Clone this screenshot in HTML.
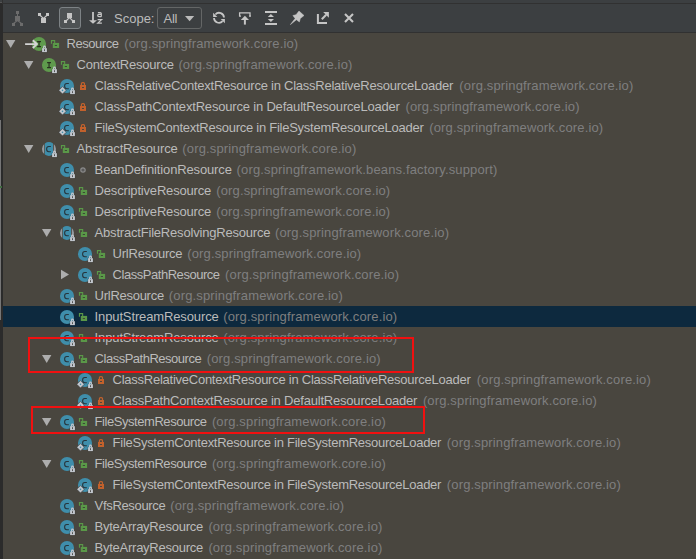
<!DOCTYPE html><html><head><meta charset="utf-8"><style>
html,body{margin:0;padding:0;width:696px;height:559px;overflow:hidden;background:#49463f;}
body{position:relative;font-family:"Liberation Sans",sans-serif;font-size:13px;}
.a{position:absolute;}
.t{position:absolute;white-space:pre;line-height:21px;height:21px;}
svg{position:absolute;overflow:visible;}
</style></head><body>

<div class="a" style="left:0;top:0;width:696px;height:3px;background:#3c3f41"></div>
<div class="a" style="left:0;top:3px;width:696px;height:1px;background:#313131"></div>
<div class="a" style="left:0;top:4px;width:696px;height:28px;background:#3c3f41"></div>
<div class="a" style="left:0;top:32px;width:696px;height:1px;background:#313131"></div>
<div class="a" style="left:0;top:3px;width:3px;height:556px;background:#2b2b2b"></div>
<div class="a" style="left:2px;top:0;width:1px;height:4px;background:#313131"></div>
<div class="a" style="left:0;top:2px;width:2px;height:1px;background:#555555"></div>
<div class="a" style="left:0;top:120px;width:1px;height:200px;background:#767676"></div>
<div class="a" style="left:0;top:186px;width:2px;height:2px;background:#3f6a3e"></div>
<svg class="a" style="left:0;top:0" width="696" height="33" viewBox="0 0 696 33">
<g fill="#6c6c6c" stroke="none">
<rect x="16" y="11" width="3" height="3"/><rect x="17" y="13.5" width="1" height="3"/><rect x="15" y="16" width="5" height="5"/>
<rect x="12" y="23" width="3" height="3"/><rect x="20" y="23" width="3" height="3"/>
</g>
<path d="M17.5 20.5L13.5 23.5M17.5 20.5L21.5 23.5" stroke="#6c6c6c" stroke-width="1.1"/>
<g fill="#c5c5c5">
<rect x="38" y="13" width="3" height="3"/><rect x="46" y="13" width="3" height="3"/><rect x="41" y="18" width="5" height="5"/>
</g>
<path d="M40 15.2L43.5 18.5L47 15.2" stroke="#c5c5c5" stroke-width="1.2" fill="none"/>
<rect x="59.5" y="7.5" width="21" height="21" rx="2.5" fill="#4e5254" stroke="#7d8285" stroke-width="1"/>
<g fill="#c5c5c5">
<rect x="67" y="13" width="5" height="5"/><rect x="64" y="20" width="3" height="3"/><rect x="72" y="20" width="3" height="3"/>
</g>
<path d="M66 21L69.5 17.6L73 21" stroke="#c5c5c5" stroke-width="1.2" fill="none"/>
<path d="M93 12V21" stroke="#c5c5c5" stroke-width="1.8"/>
<path d="M89 20.2H97L93 23.8Z" fill="#c5c5c5"/>
<path d="M97.9 12.6H100.3Q101.3 12.6 101.3 13.6V16.8M101.3 14.4H99Q97.7 14.4 97.7 15.6Q97.7 16.7 99 16.7H101.3" stroke="#c5c5c5" stroke-width="1.2" fill="none"/>
<path d="M97.6 19.6H101.6L97.8 23.1H101.9" stroke="#c5c5c5" stroke-width="1.2" fill="none"/>
<rect x="157.5" y="7.5" width="44" height="21" rx="2.5" fill="#3c3f41" stroke="#646666" stroke-width="1"/>
<path d="M185 16H194.2L189.6 21.3Z" fill="#bbbbbb"/>
<path d="M215.4 14.5A4.9 4.9 0 0 1 224 17.6" stroke="#c5c5c5" stroke-width="1.8" fill="none"/>
<path d="M213.1 12.7V16.9H217.3Z" fill="#c5c5c5"/>
<path d="M222.6 21.1A4.9 4.9 0 0 1 214 18" stroke="#c5c5c5" stroke-width="1.8" fill="none"/>
<path d="M224.9 23.2V19H220.7Z" fill="#c5c5c5"/>
<path d="M239.6 16.8V12.8H250V16.8M239 16.2H241M249 16.2H251" stroke="#c5c5c5" stroke-width="1.3" fill="none"/>
<path d="M240.8 19.9L244.9 15.7L249 19.9Z" fill="#c5c5c5"/>
<path d="M244.9 19V24.6" stroke="#c5c5c5" stroke-width="2"/>
<path d="M265 12H277M265 24H277" stroke="#c5c5c5" stroke-width="2"/>
<path d="M267.8 16.9L270.9 14L274 16.9ZM267.8 19.1H274L270.9 22Z" fill="#c5c5c5"/>
<path d="M299 11L304 15.5L300.3 18.6L299.4 21.9L296.4 19.8L290.4 24.6L295.1 18.5L292.9 15.5L296 14.8Z" fill="#c5c5c5" stroke="#c5c5c5" stroke-width="0.5" stroke-linejoin="round"/>
<path d="M317.9 13.9V23H327" stroke="#c5c5c5" stroke-width="2" fill="none"/>
<path d="M323.2 12.1H328.9V17.8Z" fill="#c5c5c5"/>
<path d="M321.8 19.2L326.2 14.8" stroke="#c5c5c5" stroke-width="2"/>
<path d="M345 14.1L353 22.1M353 14.1L345 22.1" stroke="#c5c5c5" stroke-width="2.1"/>
</svg>
<div class="t" style="left:114px;top:7.5px;color:#bbbbbb">Scope:</div>
<div class="t" style="left:163.5px;top:7.5px;color:#bbbbbb;letter-spacing:-0.25px">All</div>
<div class="a" style="left:3px;top:306px;width:693px;height:21px;background:#0d293e"></div>
<svg width="0" height="0" style="position:absolute"><defs>
<symbol id="lockw" viewBox="0 0 16 16" overflow="visible">
</symbol>
</defs></svg>
<svg class="a" style="left:5.80px;top:39px" width="10" height="10" viewBox="0 0 10 10"><path d="M0 0.9H9.4L4.7 9.1Z" fill="#adadad"/></svg>
<svg class="a" style="left:30.90px;top:35.90px" width="16" height="16" viewBox="0 0 16 16"><circle cx="8" cy="8" r="7.05" fill="#5f9a4d"/><path d="M6.1 5.6h3.9M6.1 10.6h3.9M8.05 5.6v5" stroke="#27301f" stroke-width="1.15" fill="none"/><path d="M-5.9 8.1H5.8M1.8 4.2L5.9 8.1L1.8 12" stroke="#d4d4d4" stroke-width="1.9" fill="none"/><path d="M10.8 12.0h5.4v4.4h-5.4z" fill="none" stroke="#333" stroke-width="0.6" opacity="0.35"/><path d="M11.1 12.2h4.8v3.9h-4.8z" fill="#c3c8cf"/><path d="M12.6 12.4V11A0.9 0.9 0 0 1 14.4 11V12.4" fill="none" stroke="#c3c8cf" stroke-width="1.1"/><path d="M13.5 13.2v1.9" stroke="#555" stroke-width="1"/></svg>
<svg class="a" style="left:49.90px;top:32px" width="12" height="21" viewBox="0 0 12 21"><path d="M1.45 11.8V8.6H4.65V11" stroke="#5a9848" stroke-width="1.1" fill="none"/><rect x="2.8" y="10.9" width="6.3" height="5.1" fill="#5a9848"/><rect x="4.8" y="13" width="2.2" height="1" fill="#3c4a35"/></svg>
<div class="t" style="left:66.50px;top:33px;color:#bbbbbb;letter-spacing:-0.457px">Resource</div>
<div class="t" style="left:124.20px;top:33px;color:#7f7f7f;letter-spacing:0.150px">(org.springframework.core.io)</div>
<svg class="a" style="left:23.80px;top:60px" width="10" height="10" viewBox="0 0 10 10"><path d="M0 0.9H9.4L4.7 9.1Z" fill="#adadad"/></svg>
<svg class="a" style="left:41.00px;top:56.90px" width="16" height="16" viewBox="0 0 16 16"><circle cx="8" cy="8" r="7.05" fill="#5f9a4d"/><path d="M6.1 5.6h3.9M6.1 10.6h3.9M8.05 5.6v5" stroke="#27301f" stroke-width="1.15" fill="none"/><path d="M10.8 12.0h5.4v4.4h-5.4z" fill="none" stroke="#333" stroke-width="0.6" opacity="0.35"/><path d="M11.1 12.2h4.8v3.9h-4.8z" fill="#c3c8cf"/><path d="M12.6 12.4V11A0.9 0.9 0 0 1 14.4 11V12.4" fill="none" stroke="#c3c8cf" stroke-width="1.1"/><path d="M13.5 13.2v1.9" stroke="#555" stroke-width="1"/></svg>
<svg class="a" style="left:60.00px;top:53px" width="12" height="21" viewBox="0 0 12 21"><path d="M1.45 11.8V8.6H4.65V11" stroke="#5a9848" stroke-width="1.1" fill="none"/><rect x="2.8" y="10.9" width="6.3" height="5.1" fill="#5a9848"/><rect x="4.8" y="13" width="2.2" height="1" fill="#3c4a35"/></svg>
<div class="t" style="left:76.60px;top:54px;color:#bbbbbb;letter-spacing:-0.221px">ContextResource</div>
<div class="t" style="left:178.40px;top:54px;color:#7f7f7f;letter-spacing:0.150px">(org.springframework.core.io)</div>
<svg class="a" style="left:59.00px;top:77.90px" width="16" height="16" viewBox="0 0 16 16"><circle cx="8" cy="8" r="7.05" fill="#3f8eab"/><path d="M9.85 5.5H7.8Q5.6 5.5 5.6 8.1Q5.6 10.75 7.8 10.75H9.85" stroke="#26343b" stroke-width="1.05" fill="none"/><path d="M3.5 8.6L7.2 12.3L3.5 16L-0.2 12.3Z" fill="#c3c8cf" stroke="#3a3a3a" stroke-width="0.6"/><circle cx="3.5" cy="12.35" r="0.8" fill="#3f8eab"/><path d="M10.8 12.0h5.4v4.4h-5.4z" fill="none" stroke="#333" stroke-width="0.6" opacity="0.35"/><path d="M11.1 12.2h4.8v3.9h-4.8z" fill="#c3c8cf"/><path d="M12.6 12.4V11A0.9 0.9 0 0 1 14.4 11V12.4" fill="none" stroke="#c3c8cf" stroke-width="1.1"/><path d="M13.5 13.2v1.9" stroke="#555" stroke-width="1"/></svg>
<svg class="a" style="left:78.00px;top:74px" width="12" height="21" viewBox="0 0 12 21"><path d="M3.4 11.3V9.8Q3.4 8.6 4.6 8.6H5.3Q6.5 8.6 6.5 9.8V11.3" stroke="#c2612c" stroke-width="1.2" fill="none"/><rect x="2" y="11" width="6" height="5" fill="#c2612c"/><rect x="4" y="13" width="2" height="1" fill="#4a4640"/></svg>
<div class="t" style="left:94.60px;top:75px;color:#bbbbbb;letter-spacing:-0.245px">ClassRelativeContextResource in ClassRelativeResourceLoader</div>
<div class="t" style="left:459.30px;top:75px;color:#7f7f7f;letter-spacing:0.150px">(org.springframework.core.io)</div>
<svg class="a" style="left:59.00px;top:98.90px" width="16" height="16" viewBox="0 0 16 16"><circle cx="8" cy="8" r="7.05" fill="#3f8eab"/><path d="M9.85 5.5H7.8Q5.6 5.5 5.6 8.1Q5.6 10.75 7.8 10.75H9.85" stroke="#26343b" stroke-width="1.05" fill="none"/><path d="M3.5 8.6L7.2 12.3L3.5 16L-0.2 12.3Z" fill="#c3c8cf" stroke="#3a3a3a" stroke-width="0.6"/><circle cx="3.5" cy="12.35" r="0.8" fill="#3f8eab"/><path d="M10.8 12.0h5.4v4.4h-5.4z" fill="none" stroke="#333" stroke-width="0.6" opacity="0.35"/><path d="M11.1 12.2h4.8v3.9h-4.8z" fill="#c3c8cf"/><path d="M12.6 12.4V11A0.9 0.9 0 0 1 14.4 11V12.4" fill="none" stroke="#c3c8cf" stroke-width="1.1"/><path d="M13.5 13.2v1.9" stroke="#555" stroke-width="1"/></svg>
<svg class="a" style="left:78.00px;top:95px" width="12" height="21" viewBox="0 0 12 21"><path d="M3.4 11.3V9.8Q3.4 8.6 4.6 8.6H5.3Q6.5 8.6 6.5 9.8V11.3" stroke="#c2612c" stroke-width="1.2" fill="none"/><rect x="2" y="11" width="6" height="5" fill="#c2612c"/><rect x="4" y="13" width="2" height="1" fill="#4a4640"/></svg>
<div class="t" style="left:94.60px;top:96px;color:#bbbbbb;letter-spacing:-0.187px">ClassPathContextResource in DefaultResourceLoader</div>
<div class="t" style="left:405.50px;top:96px;color:#7f7f7f;letter-spacing:0.150px">(org.springframework.core.io)</div>
<svg class="a" style="left:59.00px;top:119.90px" width="16" height="16" viewBox="0 0 16 16"><circle cx="8" cy="8" r="7.05" fill="#3f8eab"/><path d="M9.85 5.5H7.8Q5.6 5.5 5.6 8.1Q5.6 10.75 7.8 10.75H9.85" stroke="#26343b" stroke-width="1.05" fill="none"/><path d="M3.5 8.6L7.2 12.3L3.5 16L-0.2 12.3Z" fill="#c3c8cf" stroke="#3a3a3a" stroke-width="0.6"/><circle cx="3.5" cy="12.35" r="0.8" fill="#3f8eab"/><path d="M10.8 12.0h5.4v4.4h-5.4z" fill="none" stroke="#333" stroke-width="0.6" opacity="0.35"/><path d="M11.1 12.2h4.8v3.9h-4.8z" fill="#c3c8cf"/><path d="M12.6 12.4V11A0.9 0.9 0 0 1 14.4 11V12.4" fill="none" stroke="#c3c8cf" stroke-width="1.1"/><path d="M13.5 13.2v1.9" stroke="#555" stroke-width="1"/></svg>
<svg class="a" style="left:78.00px;top:116px" width="12" height="21" viewBox="0 0 12 21"><path d="M3.4 11.3V9.8Q3.4 8.6 4.6 8.6H5.3Q6.5 8.6 6.5 9.8V11.3" stroke="#c2612c" stroke-width="1.2" fill="none"/><rect x="2" y="11" width="6" height="5" fill="#c2612c"/><rect x="4" y="13" width="2" height="1" fill="#4a4640"/></svg>
<div class="t" style="left:94.60px;top:117px;color:#bbbbbb;letter-spacing:-0.256px">FileSystemContextResource in FileSystemResourceLoader</div>
<div class="t" style="left:429.20px;top:117px;color:#7f7f7f;letter-spacing:0.150px">(org.springframework.core.io)</div>
<svg class="a" style="left:23.80px;top:144px" width="10" height="10" viewBox="0 0 10 10"><path d="M0 0.9H9.4L4.7 9.1Z" fill="#adadad"/></svg>
<svg class="a" style="left:41.00px;top:140.90px" width="16" height="16" viewBox="0 0 16 16"><path d="M3.2 2.9A7 7 0 0 0 3.2 13.1Z M12.8 2.9A7 7 0 0 1 12.8 13.1Z" fill="#959aa0"/><path d="M3.85 2.4A7 7 0 0 1 12.0 2.4V13.6A7 7 0 0 1 3.85 13.6Z" fill="#3f8eab"/><path d="M9.85 5.5H7.8Q5.6 5.5 5.6 8.1Q5.6 10.75 7.8 10.75H9.85" stroke="#26343b" stroke-width="1.05" fill="none"/><path d="M10.8 12.0h5.4v4.4h-5.4z" fill="none" stroke="#333" stroke-width="0.6" opacity="0.35"/><path d="M11.1 12.2h4.8v3.9h-4.8z" fill="#c3c8cf"/><path d="M12.6 12.4V11A0.9 0.9 0 0 1 14.4 11V12.4" fill="none" stroke="#c3c8cf" stroke-width="1.1"/><path d="M13.5 13.2v1.9" stroke="#555" stroke-width="1"/></svg>
<svg class="a" style="left:60.00px;top:137px" width="12" height="21" viewBox="0 0 12 21"><path d="M1.45 11.8V8.6H4.65V11" stroke="#5a9848" stroke-width="1.1" fill="none"/><rect x="2.8" y="10.9" width="6.3" height="5.1" fill="#5a9848"/><rect x="4.8" y="13" width="2.2" height="1" fill="#3c4a35"/></svg>
<div class="t" style="left:76.60px;top:138px;color:#bbbbbb;letter-spacing:-0.147px">AbstractResource</div>
<div class="t" style="left:182.30px;top:138px;color:#7f7f7f;letter-spacing:0.150px">(org.springframework.core.io)</div>
<svg class="a" style="left:59.00px;top:161.90px" width="16" height="16" viewBox="0 0 16 16"><circle cx="8" cy="8" r="7.05" fill="#3f8eab"/><path d="M9.85 5.5H7.8Q5.6 5.5 5.6 8.1Q5.6 10.75 7.8 10.75H9.85" stroke="#26343b" stroke-width="1.05" fill="none"/><path d="M10.8 12.0h5.4v4.4h-5.4z" fill="none" stroke="#333" stroke-width="0.6" opacity="0.35"/><path d="M11.1 12.2h4.8v3.9h-4.8z" fill="#c3c8cf"/><path d="M12.6 12.4V11A0.9 0.9 0 0 1 14.4 11V12.4" fill="none" stroke="#c3c8cf" stroke-width="1.1"/><path d="M13.5 13.2v1.9" stroke="#555" stroke-width="1"/></svg>
<svg class="a" style="left:78.00px;top:159px" width="12" height="21" viewBox="0 0 12 21"><circle cx="5" cy="11" r="2.2" fill="#5a5a5a" stroke="#8a8a8a" stroke-width="1.2"/></svg>
<div class="t" style="left:94.60px;top:159px;color:#bbbbbb;letter-spacing:-0.138px">BeanDefinitionResource</div>
<div class="t" style="left:236.60px;top:159px;color:#7f7f7f;letter-spacing:0.143px">(org.springframework.beans.factory.support)</div>
<svg class="a" style="left:59.00px;top:182.90px" width="16" height="16" viewBox="0 0 16 16"><circle cx="8" cy="8" r="7.05" fill="#3f8eab"/><path d="M9.85 5.5H7.8Q5.6 5.5 5.6 8.1Q5.6 10.75 7.8 10.75H9.85" stroke="#26343b" stroke-width="1.05" fill="none"/><path d="M10.8 12.0h5.4v4.4h-5.4z" fill="none" stroke="#333" stroke-width="0.6" opacity="0.35"/><path d="M11.1 12.2h4.8v3.9h-4.8z" fill="#c3c8cf"/><path d="M12.6 12.4V11A0.9 0.9 0 0 1 14.4 11V12.4" fill="none" stroke="#c3c8cf" stroke-width="1.1"/><path d="M13.5 13.2v1.9" stroke="#555" stroke-width="1"/></svg>
<svg class="a" style="left:78.00px;top:179px" width="12" height="21" viewBox="0 0 12 21"><path d="M1.45 11.8V8.6H4.65V11" stroke="#5a9848" stroke-width="1.1" fill="none"/><rect x="2.8" y="10.9" width="6.3" height="5.1" fill="#5a9848"/><rect x="4.8" y="13" width="2.2" height="1" fill="#3c4a35"/></svg>
<div class="t" style="left:94.60px;top:180px;color:#bbbbbb;letter-spacing:-0.183px">DescriptiveResource</div>
<div class="t" style="left:216.20px;top:180px;color:#7f7f7f;letter-spacing:0.150px">(org.springframework.core.io)</div>
<svg class="a" style="left:59.00px;top:203.90px" width="16" height="16" viewBox="0 0 16 16"><circle cx="8" cy="8" r="7.05" fill="#3f8eab"/><path d="M9.85 5.5H7.8Q5.6 5.5 5.6 8.1Q5.6 10.75 7.8 10.75H9.85" stroke="#26343b" stroke-width="1.05" fill="none"/><path d="M10.8 12.0h5.4v4.4h-5.4z" fill="none" stroke="#333" stroke-width="0.6" opacity="0.35"/><path d="M11.1 12.2h4.8v3.9h-4.8z" fill="#c3c8cf"/><path d="M12.6 12.4V11A0.9 0.9 0 0 1 14.4 11V12.4" fill="none" stroke="#c3c8cf" stroke-width="1.1"/><path d="M13.5 13.2v1.9" stroke="#555" stroke-width="1"/></svg>
<svg class="a" style="left:78.00px;top:200px" width="12" height="21" viewBox="0 0 12 21"><path d="M1.45 11.8V8.6H4.65V11" stroke="#5a9848" stroke-width="1.1" fill="none"/><rect x="2.8" y="10.9" width="6.3" height="5.1" fill="#5a9848"/><rect x="4.8" y="13" width="2.2" height="1" fill="#3c4a35"/></svg>
<div class="t" style="left:94.60px;top:201px;color:#bbbbbb;letter-spacing:-0.183px">DescriptiveResource</div>
<div class="t" style="left:216.20px;top:201px;color:#7f7f7f;letter-spacing:0.150px">(org.springframework.core.io)</div>
<svg class="a" style="left:41.80px;top:228px" width="10" height="10" viewBox="0 0 10 10"><path d="M0 0.9H9.4L4.7 9.1Z" fill="#adadad"/></svg>
<svg class="a" style="left:59.00px;top:224.90px" width="16" height="16" viewBox="0 0 16 16"><path d="M3.2 2.9A7 7 0 0 0 3.2 13.1Z M12.8 2.9A7 7 0 0 1 12.8 13.1Z" fill="#959aa0"/><path d="M3.85 2.4A7 7 0 0 1 12.0 2.4V13.6A7 7 0 0 1 3.85 13.6Z" fill="#3f8eab"/><path d="M9.85 5.5H7.8Q5.6 5.5 5.6 8.1Q5.6 10.75 7.8 10.75H9.85" stroke="#26343b" stroke-width="1.05" fill="none"/><path d="M10.8 12.0h5.4v4.4h-5.4z" fill="none" stroke="#333" stroke-width="0.6" opacity="0.35"/><path d="M11.1 12.2h4.8v3.9h-4.8z" fill="#c3c8cf"/><path d="M12.6 12.4V11A0.9 0.9 0 0 1 14.4 11V12.4" fill="none" stroke="#c3c8cf" stroke-width="1.1"/><path d="M13.5 13.2v1.9" stroke="#555" stroke-width="1"/></svg>
<svg class="a" style="left:78.00px;top:221px" width="12" height="21" viewBox="0 0 12 21"><path d="M1.45 11.8V8.6H4.65V11" stroke="#5a9848" stroke-width="1.1" fill="none"/><rect x="2.8" y="10.9" width="6.3" height="5.1" fill="#5a9848"/><rect x="4.8" y="13" width="2.2" height="1" fill="#3c4a35"/></svg>
<div class="t" style="left:94.60px;top:222px;color:#bbbbbb;letter-spacing:-0.196px">AbstractFileResolvingResource</div>
<div class="t" style="left:275.00px;top:222px;color:#7f7f7f;letter-spacing:0.150px">(org.springframework.core.io)</div>
<svg class="a" style="left:77.00px;top:245.90px" width="16" height="16" viewBox="0 0 16 16"><circle cx="8" cy="8" r="7.05" fill="#3f8eab"/><path d="M9.85 5.5H7.8Q5.6 5.5 5.6 8.1Q5.6 10.75 7.8 10.75H9.85" stroke="#26343b" stroke-width="1.05" fill="none"/><path d="M10.8 12.0h5.4v4.4h-5.4z" fill="none" stroke="#333" stroke-width="0.6" opacity="0.35"/><path d="M11.1 12.2h4.8v3.9h-4.8z" fill="#c3c8cf"/><path d="M12.6 12.4V11A0.9 0.9 0 0 1 14.4 11V12.4" fill="none" stroke="#c3c8cf" stroke-width="1.1"/><path d="M13.5 13.2v1.9" stroke="#555" stroke-width="1"/></svg>
<svg class="a" style="left:96.00px;top:242px" width="12" height="21" viewBox="0 0 12 21"><path d="M1.45 11.8V8.6H4.65V11" stroke="#5a9848" stroke-width="1.1" fill="none"/><rect x="2.8" y="10.9" width="6.3" height="5.1" fill="#5a9848"/><rect x="4.8" y="13" width="2.2" height="1" fill="#3c4a35"/></svg>
<div class="t" style="left:112.60px;top:243px;color:#bbbbbb;letter-spacing:-0.230px">UrlResource</div>
<div class="t" style="left:187.20px;top:243px;color:#7f7f7f;letter-spacing:0.150px">(org.springframework.core.io)</div>
<svg class="a" style="left:60.90px;top:269px" width="10" height="11" viewBox="0 0 10 11"><path d="M0 0.7V10.2L8 5.45Z" fill="#adadad"/></svg>
<svg class="a" style="left:77.00px;top:266.90px" width="16" height="16" viewBox="0 0 16 16"><circle cx="8" cy="8" r="7.05" fill="#3f8eab"/><path d="M9.85 5.5H7.8Q5.6 5.5 5.6 8.1Q5.6 10.75 7.8 10.75H9.85" stroke="#26343b" stroke-width="1.05" fill="none"/><path d="M10.8 12.0h5.4v4.4h-5.4z" fill="none" stroke="#333" stroke-width="0.6" opacity="0.35"/><path d="M11.1 12.2h4.8v3.9h-4.8z" fill="#c3c8cf"/><path d="M12.6 12.4V11A0.9 0.9 0 0 1 14.4 11V12.4" fill="none" stroke="#c3c8cf" stroke-width="1.1"/><path d="M13.5 13.2v1.9" stroke="#555" stroke-width="1"/></svg>
<svg class="a" style="left:96.00px;top:263px" width="12" height="21" viewBox="0 0 12 21"><path d="M1.45 11.8V8.6H4.65V11" stroke="#5a9848" stroke-width="1.1" fill="none"/><rect x="2.8" y="10.9" width="6.3" height="5.1" fill="#5a9848"/><rect x="4.8" y="13" width="2.2" height="1" fill="#3c4a35"/></svg>
<div class="t" style="left:112.60px;top:264px;color:#bbbbbb;letter-spacing:-0.462px">ClassPathResource</div>
<div class="t" style="left:225.10px;top:264px;color:#7f7f7f;letter-spacing:0.150px">(org.springframework.core.io)</div>
<svg class="a" style="left:59.00px;top:287.90px" width="16" height="16" viewBox="0 0 16 16"><circle cx="8" cy="8" r="7.05" fill="#3f8eab"/><path d="M9.85 5.5H7.8Q5.6 5.5 5.6 8.1Q5.6 10.75 7.8 10.75H9.85" stroke="#26343b" stroke-width="1.05" fill="none"/><path d="M10.8 12.0h5.4v4.4h-5.4z" fill="none" stroke="#333" stroke-width="0.6" opacity="0.35"/><path d="M11.1 12.2h4.8v3.9h-4.8z" fill="#c3c8cf"/><path d="M12.6 12.4V11A0.9 0.9 0 0 1 14.4 11V12.4" fill="none" stroke="#c3c8cf" stroke-width="1.1"/><path d="M13.5 13.2v1.9" stroke="#555" stroke-width="1"/></svg>
<svg class="a" style="left:78.00px;top:284px" width="12" height="21" viewBox="0 0 12 21"><path d="M1.45 11.8V8.6H4.65V11" stroke="#5a9848" stroke-width="1.1" fill="none"/><rect x="2.8" y="10.9" width="6.3" height="5.1" fill="#5a9848"/><rect x="4.8" y="13" width="2.2" height="1" fill="#3c4a35"/></svg>
<div class="t" style="left:94.60px;top:285px;color:#bbbbbb;letter-spacing:-0.270px">UrlResource</div>
<div class="t" style="left:168.80px;top:285px;color:#7f7f7f;letter-spacing:0.150px">(org.springframework.core.io)</div>
<svg class="a" style="left:59.00px;top:308.90px" width="16" height="16" viewBox="0 0 16 16"><circle cx="8" cy="8" r="7.05" fill="#3f8eab"/><path d="M9.85 5.5H7.8Q5.6 5.5 5.6 8.1Q5.6 10.75 7.8 10.75H9.85" stroke="#26343b" stroke-width="1.05" fill="none"/><path d="M10.8 12.0h5.4v4.4h-5.4z" fill="none" stroke="#333" stroke-width="0.6" opacity="0.35"/><path d="M11.1 12.2h4.8v3.9h-4.8z" fill="#c3c8cf"/><path d="M12.6 12.4V11A0.9 0.9 0 0 1 14.4 11V12.4" fill="none" stroke="#c3c8cf" stroke-width="1.1"/><path d="M13.5 13.2v1.9" stroke="#555" stroke-width="1"/></svg>
<svg class="a" style="left:78.00px;top:305px" width="12" height="21" viewBox="0 0 12 21"><path d="M1.45 11.8V8.6H4.65V11" stroke="#5a9848" stroke-width="1.1" fill="none"/><rect x="2.8" y="10.9" width="6.3" height="5.1" fill="#5a9848"/><rect x="4.8" y="13" width="2.2" height="1" fill="#3c4a35"/></svg>
<div class="t" style="left:94.60px;top:306px;color:#bbbbbb;letter-spacing:-0.128px">InputStreamResource</div>
<div class="t" style="left:223.20px;top:306px;color:#7f7f7f;letter-spacing:0.150px">(org.springframework.core.io)</div>
<svg class="a" style="left:59.00px;top:329.90px" width="16" height="16" viewBox="0 0 16 16"><circle cx="8" cy="8" r="7.05" fill="#3f8eab"/><path d="M9.85 5.5H7.8Q5.6 5.5 5.6 8.1Q5.6 10.75 7.8 10.75H9.85" stroke="#26343b" stroke-width="1.05" fill="none"/><path d="M10.8 12.0h5.4v4.4h-5.4z" fill="none" stroke="#333" stroke-width="0.6" opacity="0.35"/><path d="M11.1 12.2h4.8v3.9h-4.8z" fill="#c3c8cf"/><path d="M12.6 12.4V11A0.9 0.9 0 0 1 14.4 11V12.4" fill="none" stroke="#c3c8cf" stroke-width="1.1"/><path d="M13.5 13.2v1.9" stroke="#555" stroke-width="1"/></svg>
<svg class="a" style="left:78.00px;top:326px" width="12" height="21" viewBox="0 0 12 21"><path d="M1.45 11.8V8.6H4.65V11" stroke="#5a9848" stroke-width="1.1" fill="none"/><rect x="2.8" y="10.9" width="6.3" height="5.1" fill="#5a9848"/><rect x="4.8" y="13" width="2.2" height="1" fill="#3c4a35"/></svg>
<div class="t" style="left:94.60px;top:327px;color:#bbbbbb;letter-spacing:-0.128px">InputStreamResource</div>
<div class="t" style="left:223.20px;top:327px;color:#7f7f7f;letter-spacing:0.150px">(org.springframework.core.io)</div>
<svg class="a" style="left:41.80px;top:354px" width="10" height="10" viewBox="0 0 10 10"><path d="M0 0.9H9.4L4.7 9.1Z" fill="#adadad"/></svg>
<svg class="a" style="left:59.00px;top:350.90px" width="16" height="16" viewBox="0 0 16 16"><circle cx="8" cy="8" r="7.05" fill="#3f8eab"/><path d="M9.85 5.5H7.8Q5.6 5.5 5.6 8.1Q5.6 10.75 7.8 10.75H9.85" stroke="#26343b" stroke-width="1.05" fill="none"/><path d="M10.8 12.0h5.4v4.4h-5.4z" fill="none" stroke="#333" stroke-width="0.6" opacity="0.35"/><path d="M11.1 12.2h4.8v3.9h-4.8z" fill="#c3c8cf"/><path d="M12.6 12.4V11A0.9 0.9 0 0 1 14.4 11V12.4" fill="none" stroke="#c3c8cf" stroke-width="1.1"/><path d="M13.5 13.2v1.9" stroke="#555" stroke-width="1"/></svg>
<svg class="a" style="left:78.00px;top:347px" width="12" height="21" viewBox="0 0 12 21"><path d="M1.45 11.8V8.6H4.65V11" stroke="#5a9848" stroke-width="1.1" fill="none"/><rect x="2.8" y="10.9" width="6.3" height="5.1" fill="#5a9848"/><rect x="4.8" y="13" width="2.2" height="1" fill="#3c4a35"/></svg>
<div class="t" style="left:94.60px;top:348px;color:#bbbbbb;letter-spacing:-0.488px">ClassPathResource</div>
<div class="t" style="left:206.70px;top:348px;color:#7f7f7f;letter-spacing:0.150px">(org.springframework.core.io)</div>
<svg class="a" style="left:77.00px;top:371.90px" width="16" height="16" viewBox="0 0 16 16"><circle cx="8" cy="8" r="7.05" fill="#3f8eab"/><path d="M9.85 5.5H7.8Q5.6 5.5 5.6 8.1Q5.6 10.75 7.8 10.75H9.85" stroke="#26343b" stroke-width="1.05" fill="none"/><path d="M3.5 8.6L7.2 12.3L3.5 16L-0.2 12.3Z" fill="#c3c8cf" stroke="#3a3a3a" stroke-width="0.6"/><circle cx="3.5" cy="12.35" r="0.8" fill="#3f8eab"/><path d="M10.8 12.0h5.4v4.4h-5.4z" fill="none" stroke="#333" stroke-width="0.6" opacity="0.35"/><path d="M11.1 12.2h4.8v3.9h-4.8z" fill="#c3c8cf"/><path d="M12.6 12.4V11A0.9 0.9 0 0 1 14.4 11V12.4" fill="none" stroke="#c3c8cf" stroke-width="1.1"/><path d="M13.5 13.2v1.9" stroke="#555" stroke-width="1"/></svg>
<svg class="a" style="left:96.00px;top:368px" width="12" height="21" viewBox="0 0 12 21"><path d="M3.4 11.3V9.8Q3.4 8.6 4.6 8.6H5.3Q6.5 8.6 6.5 9.8V11.3" stroke="#c2612c" stroke-width="1.2" fill="none"/><rect x="2" y="11" width="6" height="5" fill="#c2612c"/><rect x="4" y="13" width="2" height="1" fill="#4a4640"/></svg>
<div class="t" style="left:112.60px;top:369px;color:#bbbbbb;letter-spacing:-0.253px">ClassRelativeContextResource in ClassRelativeResourceLoader</div>
<div class="t" style="left:476.80px;top:369px;color:#7f7f7f;letter-spacing:0.150px">(org.springframework.core.io)</div>
<svg class="a" style="left:77.00px;top:392.90px" width="16" height="16" viewBox="0 0 16 16"><circle cx="8" cy="8" r="7.05" fill="#3f8eab"/><path d="M9.85 5.5H7.8Q5.6 5.5 5.6 8.1Q5.6 10.75 7.8 10.75H9.85" stroke="#26343b" stroke-width="1.05" fill="none"/><path d="M3.5 8.6L7.2 12.3L3.5 16L-0.2 12.3Z" fill="#c3c8cf" stroke="#3a3a3a" stroke-width="0.6"/><circle cx="3.5" cy="12.35" r="0.8" fill="#3f8eab"/><path d="M10.8 12.0h5.4v4.4h-5.4z" fill="none" stroke="#333" stroke-width="0.6" opacity="0.35"/><path d="M11.1 12.2h4.8v3.9h-4.8z" fill="#c3c8cf"/><path d="M12.6 12.4V11A0.9 0.9 0 0 1 14.4 11V12.4" fill="none" stroke="#c3c8cf" stroke-width="1.1"/><path d="M13.5 13.2v1.9" stroke="#555" stroke-width="1"/></svg>
<svg class="a" style="left:96.00px;top:389px" width="12" height="21" viewBox="0 0 12 21"><path d="M3.4 11.3V9.8Q3.4 8.6 4.6 8.6H5.3Q6.5 8.6 6.5 9.8V11.3" stroke="#c2612c" stroke-width="1.2" fill="none"/><rect x="2" y="11" width="6" height="5" fill="#c2612c"/><rect x="4" y="13" width="2" height="1" fill="#4a4640"/></svg>
<div class="t" style="left:112.60px;top:390px;color:#bbbbbb;letter-spacing:-0.200px">ClassPathContextResource in DefaultResourceLoader</div>
<div class="t" style="left:422.90px;top:390px;color:#7f7f7f;letter-spacing:0.150px">(org.springframework.core.io)</div>
<svg class="a" style="left:41.80px;top:417px" width="10" height="10" viewBox="0 0 10 10"><path d="M0 0.9H9.4L4.7 9.1Z" fill="#adadad"/></svg>
<svg class="a" style="left:59.00px;top:413.90px" width="16" height="16" viewBox="0 0 16 16"><circle cx="8" cy="8" r="7.05" fill="#3f8eab"/><path d="M9.85 5.5H7.8Q5.6 5.5 5.6 8.1Q5.6 10.75 7.8 10.75H9.85" stroke="#26343b" stroke-width="1.05" fill="none"/><path d="M10.8 12.0h5.4v4.4h-5.4z" fill="none" stroke="#333" stroke-width="0.6" opacity="0.35"/><path d="M11.1 12.2h4.8v3.9h-4.8z" fill="#c3c8cf"/><path d="M12.6 12.4V11A0.9 0.9 0 0 1 14.4 11V12.4" fill="none" stroke="#c3c8cf" stroke-width="1.1"/><path d="M13.5 13.2v1.9" stroke="#555" stroke-width="1"/></svg>
<svg class="a" style="left:78.00px;top:410px" width="12" height="21" viewBox="0 0 12 21"><path d="M1.45 11.8V8.6H4.65V11" stroke="#5a9848" stroke-width="1.1" fill="none"/><rect x="2.8" y="10.9" width="6.3" height="5.1" fill="#5a9848"/><rect x="4.8" y="13" width="2.2" height="1" fill="#3c4a35"/></svg>
<div class="t" style="left:94.60px;top:411px;color:#bbbbbb;letter-spacing:-0.447px">FileSystemResource</div>
<div class="t" style="left:211.90px;top:411px;color:#7f7f7f;letter-spacing:0.150px">(org.springframework.core.io)</div>
<svg class="a" style="left:77.00px;top:434.90px" width="16" height="16" viewBox="0 0 16 16"><circle cx="8" cy="8" r="7.05" fill="#3f8eab"/><path d="M9.85 5.5H7.8Q5.6 5.5 5.6 8.1Q5.6 10.75 7.8 10.75H9.85" stroke="#26343b" stroke-width="1.05" fill="none"/><path d="M3.5 8.6L7.2 12.3L3.5 16L-0.2 12.3Z" fill="#c3c8cf" stroke="#3a3a3a" stroke-width="0.6"/><circle cx="3.5" cy="12.35" r="0.8" fill="#3f8eab"/><path d="M10.8 12.0h5.4v4.4h-5.4z" fill="none" stroke="#333" stroke-width="0.6" opacity="0.35"/><path d="M11.1 12.2h4.8v3.9h-4.8z" fill="#c3c8cf"/><path d="M12.6 12.4V11A0.9 0.9 0 0 1 14.4 11V12.4" fill="none" stroke="#c3c8cf" stroke-width="1.1"/><path d="M13.5 13.2v1.9" stroke="#555" stroke-width="1"/></svg>
<svg class="a" style="left:96.00px;top:431px" width="12" height="21" viewBox="0 0 12 21"><path d="M3.4 11.3V9.8Q3.4 8.6 4.6 8.6H5.3Q6.5 8.6 6.5 9.8V11.3" stroke="#c2612c" stroke-width="1.2" fill="none"/><rect x="2" y="11" width="6" height="5" fill="#c2612c"/><rect x="4" y="13" width="2" height="1" fill="#4a4640"/></svg>
<div class="t" style="left:112.60px;top:432px;color:#bbbbbb;letter-spacing:-0.263px">FileSystemContextResource in FileSystemResourceLoader</div>
<div class="t" style="left:446.80px;top:432px;color:#7f7f7f;letter-spacing:0.150px">(org.springframework.core.io)</div>
<svg class="a" style="left:41.80px;top:459px" width="10" height="10" viewBox="0 0 10 10"><path d="M0 0.9H9.4L4.7 9.1Z" fill="#adadad"/></svg>
<svg class="a" style="left:59.00px;top:455.90px" width="16" height="16" viewBox="0 0 16 16"><circle cx="8" cy="8" r="7.05" fill="#3f8eab"/><path d="M9.85 5.5H7.8Q5.6 5.5 5.6 8.1Q5.6 10.75 7.8 10.75H9.85" stroke="#26343b" stroke-width="1.05" fill="none"/><path d="M10.8 12.0h5.4v4.4h-5.4z" fill="none" stroke="#333" stroke-width="0.6" opacity="0.35"/><path d="M11.1 12.2h4.8v3.9h-4.8z" fill="#c3c8cf"/><path d="M12.6 12.4V11A0.9 0.9 0 0 1 14.4 11V12.4" fill="none" stroke="#c3c8cf" stroke-width="1.1"/><path d="M13.5 13.2v1.9" stroke="#555" stroke-width="1"/></svg>
<svg class="a" style="left:78.00px;top:452px" width="12" height="21" viewBox="0 0 12 21"><path d="M1.45 11.8V8.6H4.65V11" stroke="#5a9848" stroke-width="1.1" fill="none"/><rect x="2.8" y="10.9" width="6.3" height="5.1" fill="#5a9848"/><rect x="4.8" y="13" width="2.2" height="1" fill="#3c4a35"/></svg>
<div class="t" style="left:94.60px;top:453px;color:#bbbbbb;letter-spacing:-0.447px">FileSystemResource</div>
<div class="t" style="left:211.90px;top:453px;color:#7f7f7f;letter-spacing:0.150px">(org.springframework.core.io)</div>
<svg class="a" style="left:77.00px;top:476.90px" width="16" height="16" viewBox="0 0 16 16"><circle cx="8" cy="8" r="7.05" fill="#3f8eab"/><path d="M9.85 5.5H7.8Q5.6 5.5 5.6 8.1Q5.6 10.75 7.8 10.75H9.85" stroke="#26343b" stroke-width="1.05" fill="none"/><path d="M3.5 8.6L7.2 12.3L3.5 16L-0.2 12.3Z" fill="#c3c8cf" stroke="#3a3a3a" stroke-width="0.6"/><circle cx="3.5" cy="12.35" r="0.8" fill="#3f8eab"/><path d="M10.8 12.0h5.4v4.4h-5.4z" fill="none" stroke="#333" stroke-width="0.6" opacity="0.35"/><path d="M11.1 12.2h4.8v3.9h-4.8z" fill="#c3c8cf"/><path d="M12.6 12.4V11A0.9 0.9 0 0 1 14.4 11V12.4" fill="none" stroke="#c3c8cf" stroke-width="1.1"/><path d="M13.5 13.2v1.9" stroke="#555" stroke-width="1"/></svg>
<svg class="a" style="left:96.00px;top:473px" width="12" height="21" viewBox="0 0 12 21"><path d="M3.4 11.3V9.8Q3.4 8.6 4.6 8.6H5.3Q6.5 8.6 6.5 9.8V11.3" stroke="#c2612c" stroke-width="1.2" fill="none"/><rect x="2" y="11" width="6" height="5" fill="#c2612c"/><rect x="4" y="13" width="2" height="1" fill="#4a4640"/></svg>
<div class="t" style="left:112.60px;top:474px;color:#bbbbbb;letter-spacing:-0.263px">FileSystemContextResource in FileSystemResourceLoader</div>
<div class="t" style="left:446.80px;top:474px;color:#7f7f7f;letter-spacing:0.150px">(org.springframework.core.io)</div>
<svg class="a" style="left:59.00px;top:497.90px" width="16" height="16" viewBox="0 0 16 16"><circle cx="8" cy="8" r="7.05" fill="#3f8eab"/><path d="M9.85 5.5H7.8Q5.6 5.5 5.6 8.1Q5.6 10.75 7.8 10.75H9.85" stroke="#26343b" stroke-width="1.05" fill="none"/><path d="M10.8 12.0h5.4v4.4h-5.4z" fill="none" stroke="#333" stroke-width="0.6" opacity="0.35"/><path d="M11.1 12.2h4.8v3.9h-4.8z" fill="#c3c8cf"/><path d="M12.6 12.4V11A0.9 0.9 0 0 1 14.4 11V12.4" fill="none" stroke="#c3c8cf" stroke-width="1.1"/><path d="M13.5 13.2v1.9" stroke="#555" stroke-width="1"/></svg>
<svg class="a" style="left:78.00px;top:494px" width="12" height="21" viewBox="0 0 12 21"><path d="M1.45 11.8V8.6H4.65V11" stroke="#5a9848" stroke-width="1.1" fill="none"/><rect x="2.8" y="10.9" width="6.3" height="5.1" fill="#5a9848"/><rect x="4.8" y="13" width="2.2" height="1" fill="#3c4a35"/></svg>
<div class="t" style="left:94.60px;top:495px;color:#bbbbbb;letter-spacing:-0.330px">VfsResource</div>
<div class="t" style="left:170.20px;top:495px;color:#7f7f7f;letter-spacing:0.150px">(org.springframework.core.io)</div>
<svg class="a" style="left:59.00px;top:518.90px" width="16" height="16" viewBox="0 0 16 16"><circle cx="8" cy="8" r="7.05" fill="#3f8eab"/><path d="M9.85 5.5H7.8Q5.6 5.5 5.6 8.1Q5.6 10.75 7.8 10.75H9.85" stroke="#26343b" stroke-width="1.05" fill="none"/><path d="M10.8 12.0h5.4v4.4h-5.4z" fill="none" stroke="#333" stroke-width="0.6" opacity="0.35"/><path d="M11.1 12.2h4.8v3.9h-4.8z" fill="#c3c8cf"/><path d="M12.6 12.4V11A0.9 0.9 0 0 1 14.4 11V12.4" fill="none" stroke="#c3c8cf" stroke-width="1.1"/><path d="M13.5 13.2v1.9" stroke="#555" stroke-width="1"/></svg>
<svg class="a" style="left:78.00px;top:515px" width="12" height="21" viewBox="0 0 12 21"><path d="M1.45 11.8V8.6H4.65V11" stroke="#5a9848" stroke-width="1.1" fill="none"/><rect x="2.8" y="10.9" width="6.3" height="5.1" fill="#5a9848"/><rect x="4.8" y="13" width="2.2" height="1" fill="#3c4a35"/></svg>
<div class="t" style="left:94.60px;top:516px;color:#bbbbbb;letter-spacing:-0.256px">ByteArrayResource</div>
<div class="t" style="left:208.40px;top:516px;color:#7f7f7f;letter-spacing:0.150px">(org.springframework.core.io)</div>
<svg class="a" style="left:59.00px;top:539.90px" width="16" height="16" viewBox="0 0 16 16"><circle cx="8" cy="8" r="7.05" fill="#3f8eab"/><path d="M9.85 5.5H7.8Q5.6 5.5 5.6 8.1Q5.6 10.75 7.8 10.75H9.85" stroke="#26343b" stroke-width="1.05" fill="none"/><path d="M10.8 12.0h5.4v4.4h-5.4z" fill="none" stroke="#333" stroke-width="0.6" opacity="0.35"/><path d="M11.1 12.2h4.8v3.9h-4.8z" fill="#c3c8cf"/><path d="M12.6 12.4V11A0.9 0.9 0 0 1 14.4 11V12.4" fill="none" stroke="#c3c8cf" stroke-width="1.1"/><path d="M13.5 13.2v1.9" stroke="#555" stroke-width="1"/></svg>
<svg class="a" style="left:78.00px;top:536px" width="12" height="21" viewBox="0 0 12 21"><path d="M1.45 11.8V8.6H4.65V11" stroke="#5a9848" stroke-width="1.1" fill="none"/><rect x="2.8" y="10.9" width="6.3" height="5.1" fill="#5a9848"/><rect x="4.8" y="13" width="2.2" height="1" fill="#3c4a35"/></svg>
<div class="t" style="left:94.60px;top:537px;color:#bbbbbb;letter-spacing:-0.256px">ByteArrayResource</div>
<div class="t" style="left:208.40px;top:537px;color:#7f7f7f;letter-spacing:0.150px">(org.springframework.core.io)</div>
<div class="a" style="left:27.5px;top:337px;width:382px;height:32px;border:2px solid #f01010"></div>
<div class="a" style="left:30.5px;top:406px;width:390.5px;height:24px;border:2px solid #f01010"></div>
</body></html>
